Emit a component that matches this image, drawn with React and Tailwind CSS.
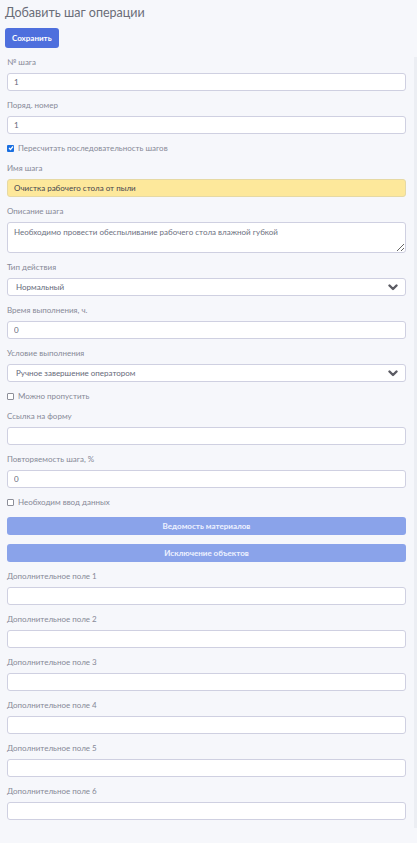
import React from 'react'

const font = { fontFamily: 'Lato, "Open Sans", sans-serif' }

function Label({ children }) {
  return (
    <div className="mt-2 mb-[5px] h-3 text-[8px] leading-3 text-[#868997]">
      {children}
    </div>
  )
}

function TextInput({ value = '', yellow }) {
  return (
    <input
      readOnly
      value={value}
      className={
        'block h-[18px] w-full rounded-[3px] border px-[6px] text-[8px] outline-none ' +
        (yellow
          ? 'border-[#e6d9a4] bg-[#fde89b] text-[#45454d]'
          : 'border-[#cfd0e1] bg-white text-[#656979]')
      }
    />
  )
}

function Select({ value }) {
  return (
    <div className="relative">
      <select className="block h-[18px] w-full appearance-none rounded-[3px] border border-[#cfd0e1] bg-white px-2 text-[8px] text-[#656979] outline-none">
        <option>{value}</option>
      </select>
      <svg
        className="pointer-events-none absolute right-[8px] top-[6px]"
        width="10"
        height="7"
        viewBox="0 0 10 7"
      >
        <polyline
          points="1.5,1.5 5,5 8.5,1.5"
          fill="none"
          stroke="#5b5b63"
          strokeWidth="2.4"
          strokeLinecap="round"
          strokeLinejoin="round"
        />
      </svg>
    </div>
  )
}

function Check({ checked, children }) {
  return (
    <label className="mt-2 flex h-3 items-center gap-[4px] text-[8px] leading-3 text-[#868997]">
      {checked ? (
        <span className="flex h-[7px] w-[7px] items-center justify-center rounded-[1px] bg-[#1a6fe0]">
          <svg width="6" height="6" viewBox="0 0 6 6">
            <polyline points="1,3 2.5,4.5 5,1.5" fill="none" stroke="#fff" strokeWidth="1.2" />
          </svg>
        </span>
      ) : (
        <span className="h-[7px] w-[7px] rounded-[1px] border border-[#8d8f99] bg-white" />
      )}
      {children}
    </label>
  )
}

function Field({ label, value, yellow }) {
  return (
    <>
      <Label>{label}</Label>
      <TextInput value={value} yellow={yellow} />
    </>
  )
}

function WideButton({ children }) {
  return (
    <button className="mt-[9px] block h-[18px] w-full rounded-[3px] bg-[#8aa3ea] text-[8px] font-bold text-[#eef2ff]">
      {children}
    </button>
  )
}

export default function App() {
  return (
    <div className="flex min-h-screen bg-[#f6f7fb]" style={font}>
      <div className="flex-1 pr-[8px] pb-6 pl-[7px]">
        <h1 className="-ml-[2px] pt-[3px] text-[12.5px] leading-5 font-normal text-[#6a6d78]">
          Добавить шаг операции
        </h1>
        <button className="-ml-[2px] mt-[5px] h-5 rounded-[3px] bg-[#4e6fdd] px-[7px] text-[8px] font-bold text-white">
          Сохранить
        </button>

        <Field label="№ шага" value="1" />
        <Field label="Поряд. номер" value="1" />
        <Check checked>Пересчитать последовательность шагов</Check>
        <Field label="Имя шага" value="Очистка рабочего стола от пыли" yellow />

        <Label>Описание шага</Label>
        <textarea
          readOnly
          value="Необходимо провести обеспыливание рабочего стола влажной губкой"
          className="block h-[31px] w-full rounded-[3px] border border-[#cfd0e1] bg-white px-[6px] pt-[3px] text-[8px] leading-3 text-[#6c6f80] outline-none"
        />

        <Label>Тип действия</Label>
        <Select value="Нормальный" />

        <Field label="Время выполнения, ч." value="0" />

        <Label>Условие выполнения</Label>
        <Select value="Ручное завершение оператором" />

        <Check>Можно пропустить</Check>
        <Field label="Ссылка на форму" />
        <Field label="Повторяемость шага, %" value="0" />
        <Check>Необходим ввод данных</Check>

        <WideButton>Ведомость материалов</WideButton>
        <WideButton>Исключение объектов</WideButton>

        {[1, 2, 3, 4, 5, 6].map((n) => (
          <Field key={n} label={'Дополнительное поле ' + n} />
        ))}
      </div>
      <div className="mt-[57px] mb-4 w-[3px] bg-[#eceef3]" />
    </div>
  )
}
